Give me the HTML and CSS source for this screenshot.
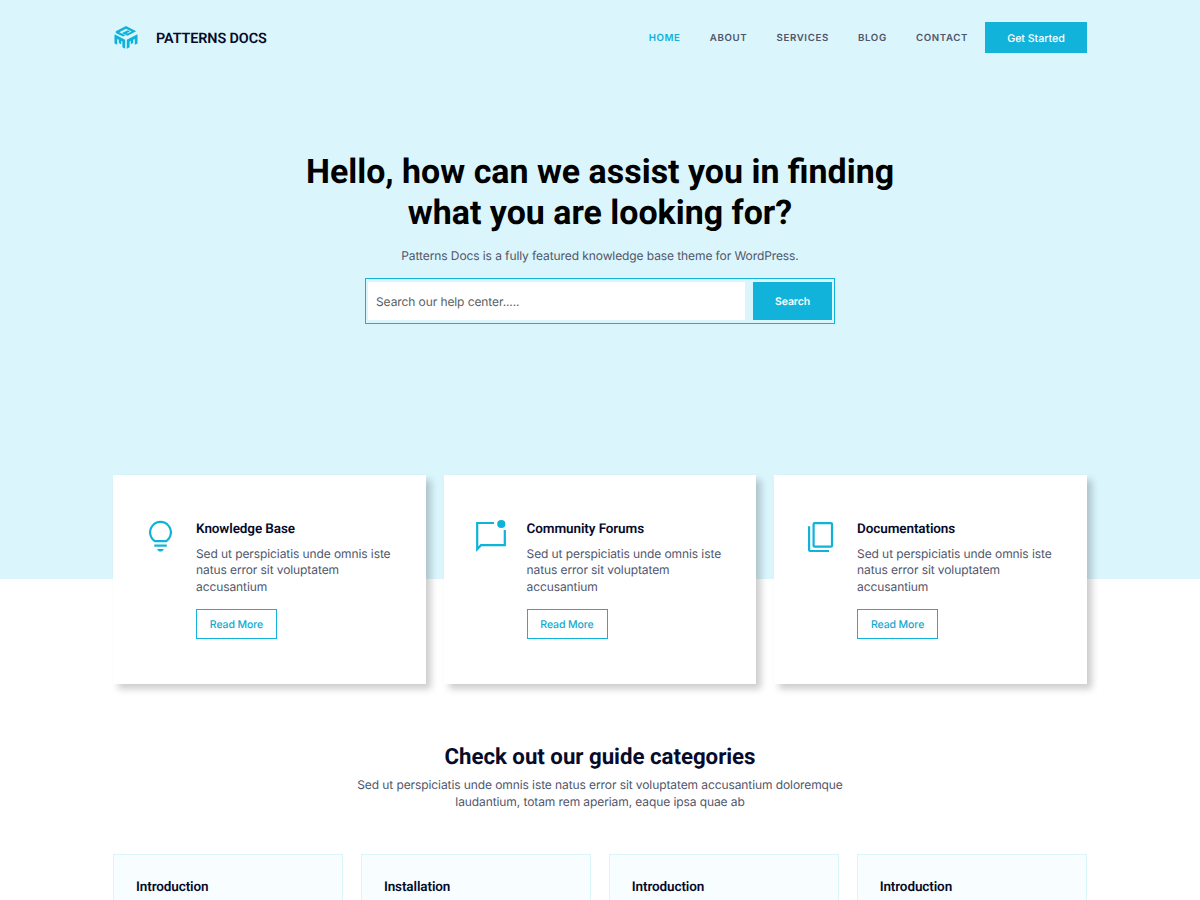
FILE: index.html
```html
<!DOCTYPE html>
<html lang="en">
<head>
<meta charset="utf-8">
<title>Patterns Docs</title>
<link rel="stylesheet" href="styles.css">
</head>
<body>
<div class="hero">
  <header class="header">
    <div class="brand">
      <svg class="logo" viewBox="0 0 24 23" fill="#0fb2d9">
        <path d="M12 0 22.200 5.300 13.500 9.800 8 7 13.800 4.200 16 5.400 12.800 7.100 13.600 7.500 17.600 5.400 12 2.700 5.300 6.200 11.500 9.300 9 10.600 1.800 6.900V5.300z"/>
        <path d="M.5 8.200 11.200 13.800V22.700L8.400 21.300V15.600L7.200 15V18.200L4.800 17V13.700L3.200 12.900V18.800L.5 17.400z"/>
        <path d="M23.500 8.200 12.800 13.800V22.700L15.600 21.300V15.600L16.800 15V18.200L19.200 17V13.700L20.800 12.900V18.800L23.500 17.400z"/>
      </svg>
      <span class="brand-name">PATTERNS DOCS</span>
    </div>
    <nav class="nav">
      <a class="active">HOME</a><a>ABOUT</a><a>SERVICES</a><a>BLOG</a><a>CONTACT</a>
    </nav>
    <a class="cta">Get Started</a>
  </header>
  <h1>Hello, how can we assist you in finding<br>what you are looking for?</h1>
  <p class="lead">Patterns Docs is a fully featured knowledge base theme for WordPress.</p>
  <div class="search">
    <div class="search-input">Search our help center.....</div>
    <div class="search-button">Search</div>
  </div>
</div>
<main class="container">
  <section class="cards">
    <article class="card">
      <svg class="icon" viewBox="0 0 36 36" fill="none" stroke="#0fb2d9" stroke-width="2.2">
        <path d="M13 22.200a10.400 10.400 0 1 1 11 0z" stroke-linejoin="round"/>
        <path d="M12.300 26.600h12.500"/>
        <path d="M15 30h7c-.8 1.700-2 2.600-3.500 2.600s-2.700-.9-3.500-2.600z" fill="#0fb2d9" stroke="none"/>
      </svg>
      <div class="card-body">
        <h3>Knowledge Base</h3>
        <p>Sed ut perspiciatis unde omnis iste<br>natus error sit voluptatem<br>accusantium</p>
        <a class="more">Read More</a>
      </div>
    </article>
    <article class="card">
      <svg class="icon" viewBox="0 0 36 36" fill="none" stroke="#0fb2d9" stroke-width="2.2">
        <path d="M21 4H4.200V30.300L8 26.200H31.800V11"/>
        <circle cx="28.300" cy="5" r="4.100" fill="#0fb2d9" stroke="none"/>
      </svg>
      <div class="card-body">
        <h3>Community Forums</h3>
        <p>Sed ut perspiciatis unde omnis iste<br>natus error sit voluptatem<br>accusantium</p>
        <a class="more">Read More</a>
      </div>
    </article>
    <article class="card">
      <svg class="icon" viewBox="0 0 36 36" fill="none" stroke="#0fb2d9" stroke-width="2.200">
        <rect x="10.600" y="4.100" width="18.400" height="23.600" rx="1"/>
        <path d="M6.100 7.300V31q0 1 1 1H26"/>
      </svg>
      <div class="card-body">
        <h3>Documentations</h3>
        <p>Sed ut perspiciatis unde omnis iste<br>natus error sit voluptatem<br>accusantium</p>
        <a class="more">Read More</a>
      </div>
    </article>
  </section>
  <section class="guide">
    <h2>Check out our guide categories</h2>
    <p>Sed ut perspiciatis unde omnis iste natus error sit voluptatem accusantium doloremque<br>laudantium, totam rem aperiam, eaque ipsa quae ab</p>
    <div class="topics">
      <div class="topic">Introduction</div>
      <div class="topic">Installation</div>
      <div class="topic">Introduction</div>
      <div class="topic">Introduction</div>
    </div>
  </section>
</main>
</body>
</html>
```
FILE: styles.css
```css
* { box-sizing: border-box; }
html, body { margin: 0; height: 900px; overflow: hidden; }
body { background: #fff; font: 12px/16.6px Inter, sans-serif; letter-spacing: -.09px; color: #50566b; text-rendering: geometricPrecision; }
h1, h2, h3, p { margin: 0; }
h1, h2, h3, .brand-name, .topic { font-family: Roboto, sans-serif; font-weight: 600; letter-spacing: 0; color: #060b2b; }
.hero { height: 578.500px; background: #daf5fc; }
.header { width: 974px; margin: 0 auto; height: 75px; display: flex; align-items: center; }
.brand { display: flex; align-items: center; gap: 18px; margin-right: auto; padding-left: 1px; }
.logo { width: 24px; height: 23px; display: block; }
.brand-name { font-size: 14.400px; line-height: 20px; padding-top: 2px; letter-spacing: -.1px; }
.nav { display: flex; gap: 29.200px; font-size: 9.700px; font-weight: 600; letter-spacing: .62px; margin-right: 17px; padding-top: 3px; }
.nav .active { color: #0fb2d9; }
.cta { width: 102px; height: 31px; background: #12b3da; color: #fff; display: flex; align-items: center; justify-content: center; font-size: 10.700px; font-weight: 500; letter-spacing: -.05px; padding-top: 3px; }
h1 { padding-top: 76.500px; text-align: center; font-size: 33.950px; line-height: 41px; color: #000; font-weight: 700; }
.lead { text-align: center; margin-top: 14.500px; }
.search { width: 470px; height: 46px; margin: 13px auto 0; border: 1px solid #12b3da; padding: 3px 2px; display: flex; gap: 8px; }
.search-input { flex: 1; background: #fff; display: flex; align-items: center; padding: 3px 0 0 8px; color: #5b5e63; }
.search-button { width: 79px; background: #12b3da; color: #fff; display: flex; align-items: center; justify-content: center; font-size: 10.500px; font-weight: 600; padding-top: 3px; }
.container { width: 974px; margin: -104px auto 0; }
.cards { display: grid; grid-template-columns: repeat(3, 1fr); gap: 17.600px; }
.card { height: 209px; background: #fff; box-shadow: 5px 5px 7px rgba(0,0,0,.2); display: flex; padding: 44px 0 0 29px; }
.icon { width: 36px; height: 36px; margin-right: 18px; flex: none; overflow: visible; }
.card h3, .topic { font-size: 13.500px; line-height: 18px; letter-spacing: -.1px; }
.card h3 { margin: 1px 0 8px; }
.card p { margin-bottom: 14px; }
.more { display: flex; align-items: center; justify-content: center; width: 81px; height: 30px; border: 1px solid #12b3da; color: #0fa9cf; font-size: 10.500px; font-weight: 500; padding-top: 2px; }
.guide { padding-top: 58.500px; text-align: center; }
.guide h2 { font-size: 22.280px; line-height: 30px; margin-bottom: 5px; font-weight: 700; letter-spacing: -.03px; }
.topics { display: grid; grid-template-columns: repeat(4, 1fr); gap: 17.500px; margin-top: 44px; text-align: left; }
.topic { height: 80px; border: 1px solid #daf5fc; background: #f8fdff; padding: 23px 22px; }
```
